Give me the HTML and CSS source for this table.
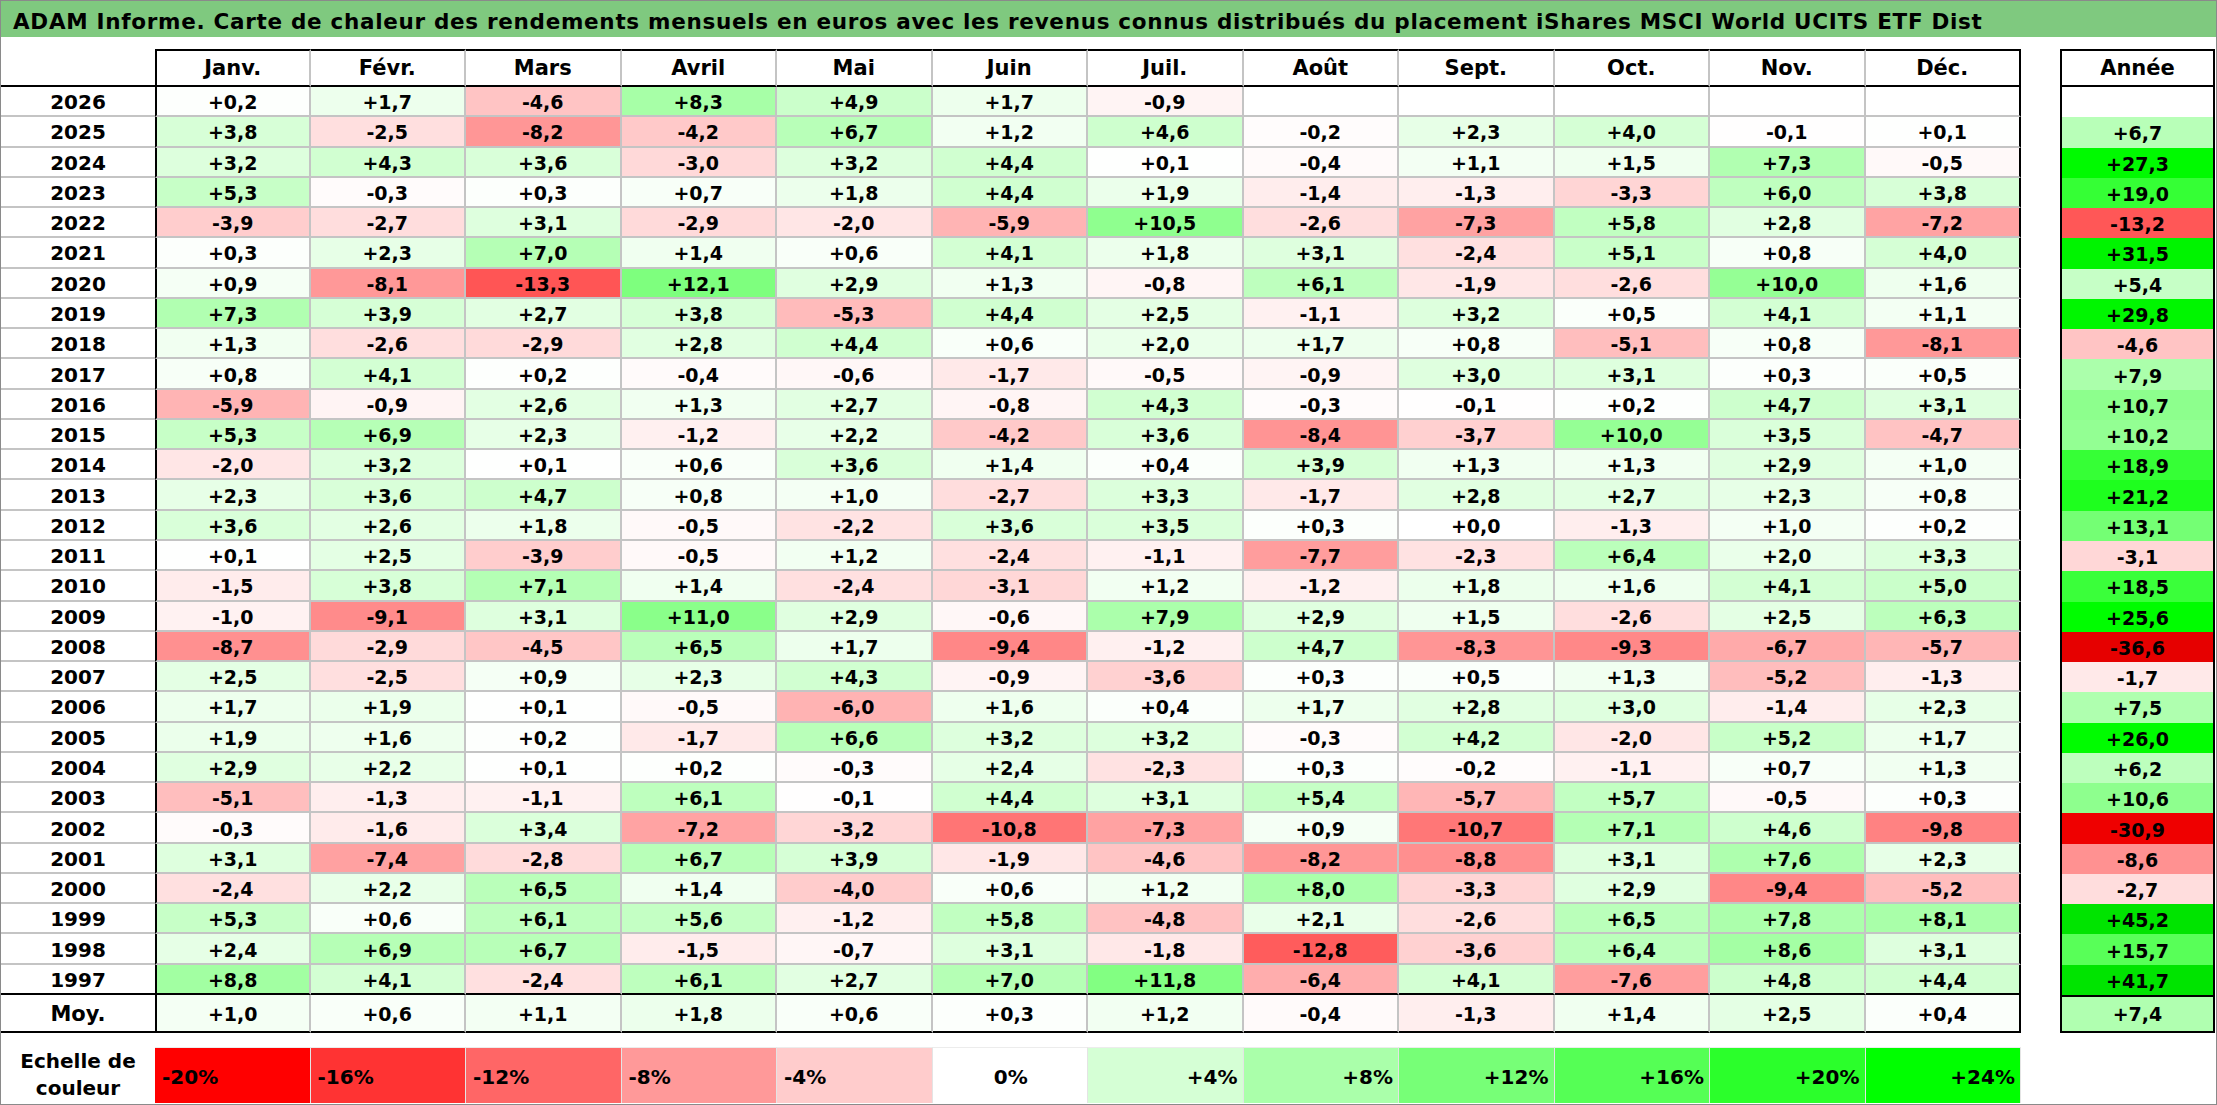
FILE: index.html
```html
<!DOCTYPE html>
<html lang="fr">
<head>
<meta charset="utf-8">
<title>ADAM Informe - Carte de chaleur</title>
<link rel="stylesheet" href="styles.css">
</head>
<body>
<div class="page">
  <div class="title">ADAM Informe. Carte de chaleur des rendements mensuels en euros avec les revenus connus distribués du placement iShares MSCI World UCITS ETF Dist</div>
  <div class="main">
    <div class="heat" id="heat"></div>
    <div class="ybox" id="ybox"></div>
  </div>
  <div class="legend">
    <div class="lab">Echelle de<br>couleur</div>
    <div class="lc neg s1">-20%</div>
    <div class="lc neg s2">-16%</div>
    <div class="lc neg s3">-12%</div>
    <div class="lc neg s4">-8%</div>
    <div class="lc neg s5">-4%</div>
    <div class="lc zero s6">0%</div>
    <div class="lc pos s7">+4%</div>
    <div class="lc pos s8">+8%</div>
    <div class="lc pos s9">+12%</div>
    <div class="lc pos s10">+16%</div>
    <div class="lc pos s11">+20%</div>
    <div class="lc pos s12">+24%</div>
  </div>
</div>
<script src="script.js"></script>
</body>
</html>
```

FILE: styles.css
```css
* { box-sizing: border-box; margin: 0; padding: 0; }
html, body { background: #fff; }
body {
  font-family: "DejaVu Sans", "Liberation Sans", sans-serif;
  font-weight: bold;
  color: #000;
}
.page {
  width: 2217px;
  height: 1105px;
  border: 1px solid #8a8a8a;
  display: flex;
  flex-direction: column;
  overflow: hidden;
}
.title {
  flex: none;
  height: 36px;
  background: #7fc97f;
  font-size: 21.5px;
  letter-spacing: 0.7px;
  line-height: 29px;
  padding: 6px 0 0 12px;
  white-space: nowrap;
}
.main {
  flex: none;
  margin-top: 12px;
  display: flex;
  gap: 39px;
  align-items: flex-start;
}
.heat {
  display: grid;
  grid-template-columns: 154px repeat(12, 155.5px);
  grid-template-rows: 38px repeat(30, 1fr) 38px;
  height: 984px;
}
.heat > div, .ybox > div {
  display: flex;
  align-items: center;
  justify-content: center;
  white-space: nowrap;
}
.corner { border-bottom: 2px solid #000; }
.mh {
  font-size: 21px;
  border-top: 2px solid #000;
  border-bottom: 2px solid #000;
  border-right: 2px solid #c4c4c4;
}
.mh.first { border-left: 2px solid #000; }
.mh.last { border-right-color: #000; }
.yr {
  font-size: 20px;
  border-bottom: 2px solid #c4c4c4;
  padding-top: 2px;
}
.c {
  font-size: 19px;
  border-right: 2px solid #c4c4c4;
  border-bottom: 2px solid #c4c4c4;
  padding-top: 2px;
}
.c.first { border-left: 2px solid #000; }
.c.last { border-right-color: #000; }
.lastrow { border-bottom-color: #000 !important; }
.moy { border-bottom: 2px solid #000 !important; }
.yr.moy { font-size: 21px; }

.ybox {
  width: 155px;
  height: 984px;
  border: 2px solid #000;
  display: grid;
  grid-template-rows: 36px repeat(30, 1fr) 36px;
}
.yh { font-size: 21px; border-bottom: 2px solid #000; }
.yc { font-size: 19px; padding-top: 2px; }
.yc.ymoy { border-top: 2px solid #000; padding-top: 0; }

.legend {
  flex: none;
  margin-top: 14px;
  height: 56px;
  display: grid;
  grid-template-columns: 154px repeat(12, 155.5px);
}
.lab {
  font-size: 20px;
  line-height: 27px;
  text-align: center;
  padding-top: 1px;
}
.lc {
  font-size: 20px;
  display: flex;
  align-items: center;
  padding: 2px 5px 0 7px;
  border-right: 1px solid #e4e4e4;
  border-top: 1px solid #ececec;
}
.neg { justify-content: flex-start; }
.pos { justify-content: flex-end; }
.zero { justify-content: center; }
.s1 { background: #ff0000; }
.s2 { background: #ff3333; }
.s3 { background: #ff6666; }
.s4 { background: #ff9999; }
.s5 { background: #ffcccc; }
.s6 { background: #ffffff; }
.s7 { background: #d5ffd5; }
.s8 { background: #aaffaa; }
.s9 { background: #77ff77; }
.s10 { background: #55ff55; }
.s11 { background: #2bff2b; }
.s12 { background: #00ff00; }
```

FILE: script.js
```js
const months = ["Janv.","Févr.","Mars","Avril","Mai","Juin","Juil.","Août","Sept.","Oct.","Nov.","Déc."];
const rows = [
 ["2026","+0,2 +1,7 -4,6 +8,3 +4,9 +1,7 -0,9",""],
 ["2025","+3,8 -2,5 -8,2 -4,2 +6,7 +1,2 +4,6 -0,2 +2,3 +4,0 -0,1 +0,1","+6,7"],
 ["2024","+3,2 +4,3 +3,6 -3,0 +3,2 +4,4 +0,1 -0,4 +1,1 +1,5 +7,3 -0,5","+27,3"],
 ["2023","+5,3 -0,3 +0,3 +0,7 +1,8 +4,4 +1,9 -1,4 -1,3 -3,3 +6,0 +3,8","+19,0"],
 ["2022","-3,9 -2,7 +3,1 -2,9 -2,0 -5,9 +10,5 -2,6 -7,3 +5,8 +2,8 -7,2","-13,2"],
 ["2021","+0,3 +2,3 +7,0 +1,4 +0,6 +4,1 +1,8 +3,1 -2,4 +5,1 +0,8 +4,0","+31,5"],
 ["2020","+0,9 -8,1 -13,3 +12,1 +2,9 +1,3 -0,8 +6,1 -1,9 -2,6 +10,0 +1,6","+5,4"],
 ["2019","+7,3 +3,9 +2,7 +3,8 -5,3 +4,4 +2,5 -1,1 +3,2 +0,5 +4,1 +1,1","+29,8"],
 ["2018","+1,3 -2,6 -2,9 +2,8 +4,4 +0,6 +2,0 +1,7 +0,8 -5,1 +0,8 -8,1","-4,6"],
 ["2017","+0,8 +4,1 +0,2 -0,4 -0,6 -1,7 -0,5 -0,9 +3,0 +3,1 +0,3 +0,5","+7,9"],
 ["2016","-5,9 -0,9 +2,6 +1,3 +2,7 -0,8 +4,3 -0,3 -0,1 +0,2 +4,7 +3,1","+10,7"],
 ["2015","+5,3 +6,9 +2,3 -1,2 +2,2 -4,2 +3,6 -8,4 -3,7 +10,0 +3,5 -4,7","+10,2"],
 ["2014","-2,0 +3,2 +0,1 +0,6 +3,6 +1,4 +0,4 +3,9 +1,3 +1,3 +2,9 +1,0","+18,9"],
 ["2013","+2,3 +3,6 +4,7 +0,8 +1,0 -2,7 +3,3 -1,7 +2,8 +2,7 +2,3 +0,8","+21,2"],
 ["2012","+3,6 +2,6 +1,8 -0,5 -2,2 +3,6 +3,5 +0,3 +0,0 -1,3 +1,0 +0,2","+13,1"],
 ["2011","+0,1 +2,5 -3,9 -0,5 +1,2 -2,4 -1,1 -7,7 -2,3 +6,4 +2,0 +3,3","-3,1"],
 ["2010","-1,5 +3,8 +7,1 +1,4 -2,4 -3,1 +1,2 -1,2 +1,8 +1,6 +4,1 +5,0","+18,5"],
 ["2009","-1,0 -9,1 +3,1 +11,0 +2,9 -0,6 +7,9 +2,9 +1,5 -2,6 +2,5 +6,3","+25,6"],
 ["2008","-8,7 -2,9 -4,5 +6,5 +1,7 -9,4 -1,2 +4,7 -8,3 -9,3 -6,7 -5,7","-36,6"],
 ["2007","+2,5 -2,5 +0,9 +2,3 +4,3 -0,9 -3,6 +0,3 +0,5 +1,3 -5,2 -1,3","-1,7"],
 ["2006","+1,7 +1,9 +0,1 -0,5 -6,0 +1,6 +0,4 +1,7 +2,8 +3,0 -1,4 +2,3","+7,5"],
 ["2005","+1,9 +1,6 +0,2 -1,7 +6,6 +3,2 +3,2 -0,3 +4,2 -2,0 +5,2 +1,7","+26,0"],
 ["2004","+2,9 +2,2 +0,1 +0,2 -0,3 +2,4 -2,3 +0,3 -0,2 -1,1 +0,7 +1,3","+6,2"],
 ["2003","-5,1 -1,3 -1,1 +6,1 -0,1 +4,4 +3,1 +5,4 -5,7 +5,7 -0,5 +0,3","+10,6"],
 ["2002","-0,3 -1,6 +3,4 -7,2 -3,2 -10,8 -7,3 +0,9 -10,7 +7,1 +4,6 -9,8","-30,9"],
 ["2001","+3,1 -7,4 -2,8 +6,7 +3,9 -1,9 -4,6 -8,2 -8,8 +3,1 +7,6 +2,3","-8,6"],
 ["2000","-2,4 +2,2 +6,5 +1,4 -4,0 +0,6 +1,2 +8,0 -3,3 +2,9 -9,4 -5,2","-2,7"],
 ["1999","+5,3 +0,6 +6,1 +5,6 -1,2 +5,8 -4,8 +2,1 -2,6 +6,5 +7,8 +8,1","+45,2"],
 ["1998","+2,4 +6,9 +6,7 -1,5 -0,7 +3,1 -1,8 -12,8 -3,6 +6,4 +8,6 +3,1","+15,7"],
 ["1997","+8,8 +4,1 -2,4 +6,1 +2,7 +7,0 +11,8 -6,4 +4,1 -7,6 +4,8 +4,4","+41,7"]
];
const moy = ["+1,0 +0,6 +1,1 +1,8 +0,6 +0,3 +1,2 -0,4 -1,3 +1,4 +2,5 +0,4", "+7,4"];

function bg(s) {
  if (!s) return "#ffffff";
  const v = parseFloat(s.replace(",", "."));
  if (v < 0) {
    const t = -v / 20;
    if (t <= 1) { const c = Math.round(255 * (1 - t)); return "rgb(255," + c + "," + c + ")"; }
    const r = Math.max(228, Math.round(255 - (-v - 20) * 1.5));
    return "rgb(" + r + ",0,0)";
  }
  if (v > 0) {
    const t = v / 24;
    if (t <= 1) { const c = Math.round(255 * (1 - t)); return "rgb(" + c + ",255," + c + ")"; }
    const g = Math.max(228, Math.round(255 - (v - 24) * 1.5));
    return "rgb(0," + g + ",0)";
  }
  return "#ffffff";
}

function cell(parent, cls, text, color) {
  const d = document.createElement("div");
  d.className = cls;
  d.textContent = text;
  if (color) d.style.background = color;
  parent.appendChild(d);
  return d;
}

const heat = document.getElementById("heat");
const ybox = document.getElementById("ybox");

cell(heat, "corner", "");
months.forEach((m, i) => {
  cell(heat, "mh" + (i === 0 ? " first" : "") + (i === 11 ? " last" : ""), m);
});
cell(ybox, "yh", "Année");

function addRow(label, vals, yearVal, extra, isMoy) {
  cell(heat, "yr" + extra, label);
  const arr = vals.split(" ");
  for (let i = 0; i < 12; i++) {
    const s = arr[i] || "";
    cell(heat, "c" + (i === 0 ? " first" : "") + (i === 11 ? " last" : "") + extra, s, bg(s));
  }
  cell(ybox, "yc" + (isMoy ? " ymoy" : ""), yearVal, bg(yearVal));
}

rows.forEach((r, idx) => {
  addRow(r[0], r[1], r[2], idx === rows.length - 1 ? " lastrow" : "", false);
});
addRow("Moy.", moy[0], moy[1], " moy", true);
```
